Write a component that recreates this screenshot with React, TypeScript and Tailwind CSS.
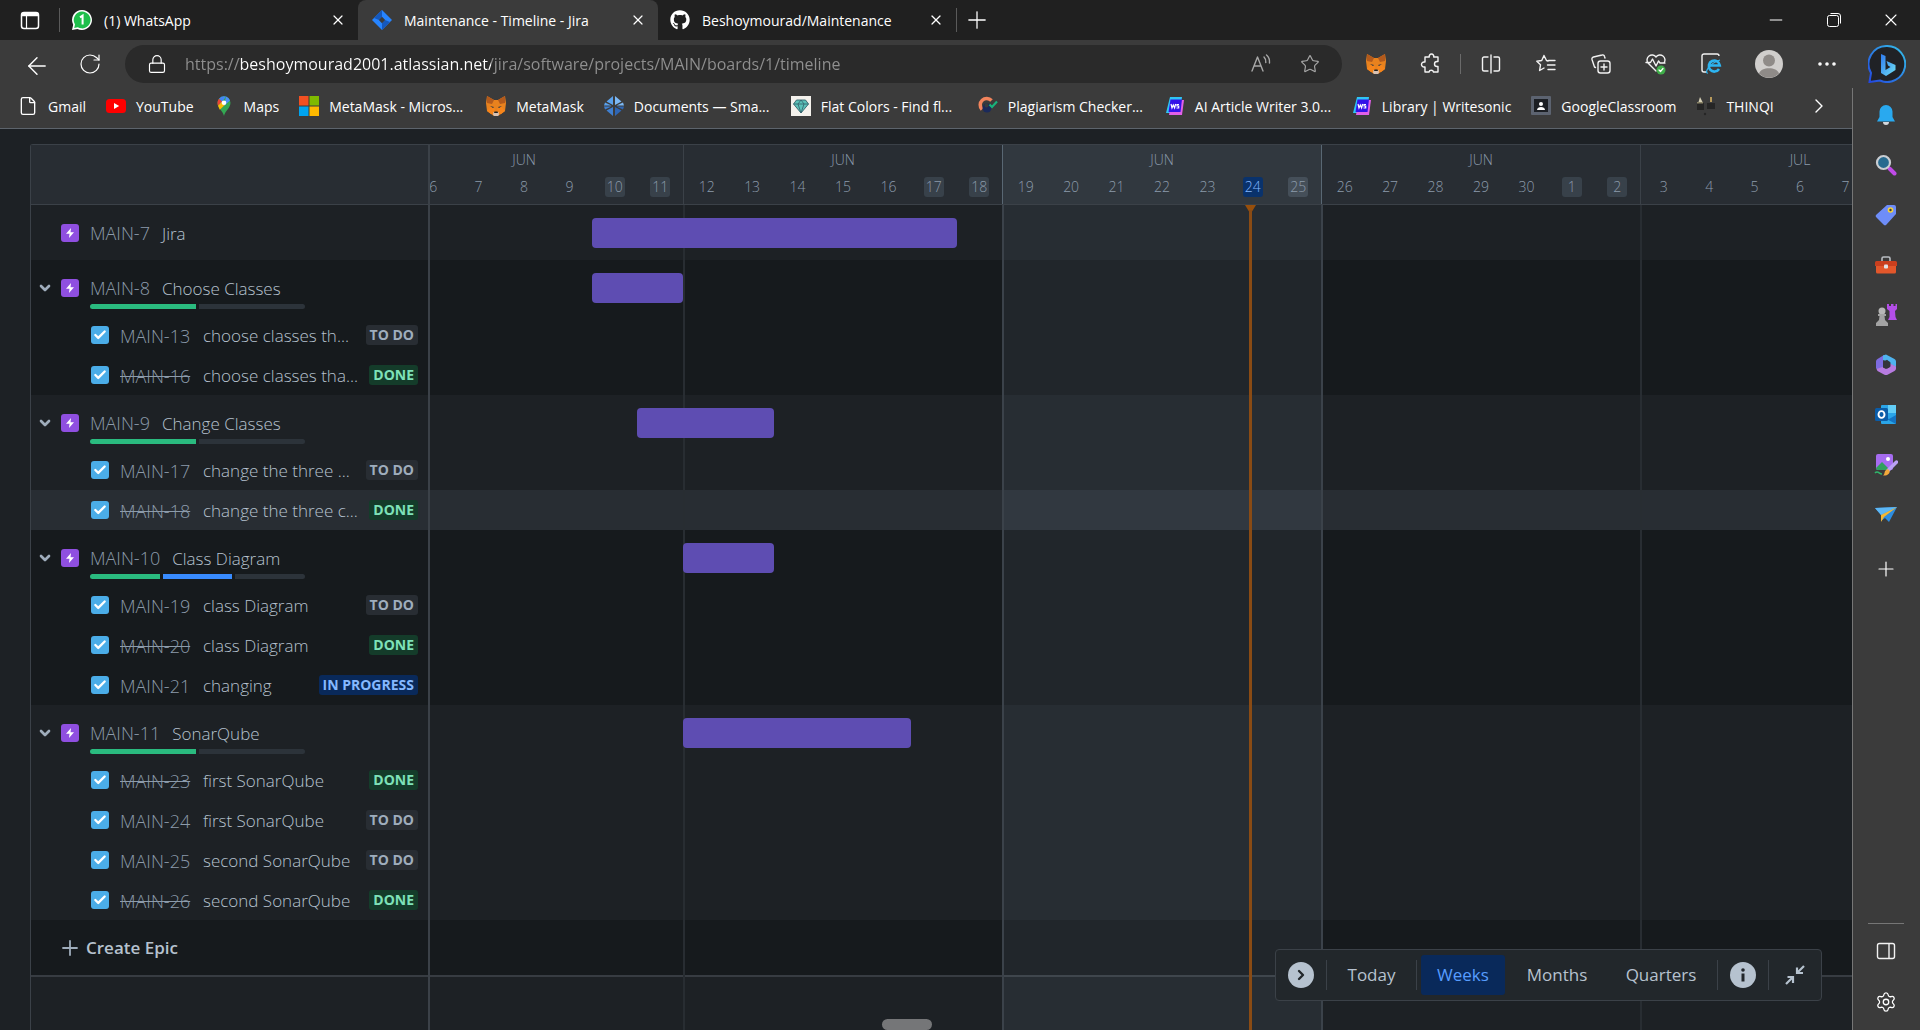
import React, { useState } from "react";
import {
  ArrowLeft,
  Check,
  ChevronDown,
  ChevronRight,
  Ellipsis,
  File,
  Lock,
  Minus,
  Plus,
  RotateCw,
  Settings,
  Star,
  X,
} from "lucide-react";
import { FaGithub } from "react-icons/fa";

type Status = "TO DO" | "DONE" | "IN PROGRESS";
type Task = { key: string; summary: string; status: Status; hovered?: boolean };
type Epic = {
  key: string;
  summary: string;
  segments: string[];
  tasks: Task[];
  start: number;
  days: number;
};

const GREEN = "bg-[#2abb7f]";
const BLUE = "bg-[#388bff]";
const GREY = "bg-[#2c333a]";

const epics: Epic[] = [
  { key: "MAIN-7", summary: "Jira", segments: [], tasks: [], start: 5, days: 8 },
  {
    key: "MAIN-8",
    summary: "Choose Classes",
    segments: [GREEN, GREY],
    start: 5,
    days: 2,
    tasks: [
      { key: "MAIN-13", summary: "choose classes th...", status: "TO DO" },
      { key: "MAIN-16", summary: "choose classes tha...", status: "DONE" },
    ],
  },
  {
    key: "MAIN-9",
    summary: "Change Classes",
    segments: [GREEN, GREY],
    start: 6,
    days: 3,
    tasks: [
      { key: "MAIN-17", summary: "change the three ...", status: "TO DO" },
      { key: "MAIN-18", summary: "change the three c...", status: "DONE", hovered: true },
    ],
  },
  {
    key: "MAIN-10",
    summary: "Class Diagram",
    segments: [GREEN, BLUE, GREY],
    start: 7,
    days: 2,
    tasks: [
      { key: "MAIN-19", summary: "class Diagram", status: "TO DO" },
      { key: "MAIN-20", summary: "class Diagram", status: "DONE" },
      { key: "MAIN-21", summary: "changing", status: "IN PROGRESS" },
    ],
  },
  {
    key: "MAIN-11",
    summary: "SonarQube",
    segments: [GREEN, GREY],
    start: 7,
    days: 5,
    tasks: [
      { key: "MAIN-23", summary: "first SonarQube", status: "DONE" },
      { key: "MAIN-24", summary: "first SonarQube", status: "TO DO" },
      { key: "MAIN-25", summary: "second SonarQube", status: "TO DO" },
      { key: "MAIN-26", summary: "second SonarQube", status: "DONE" },
    ],
  },
];

const weeks = [
  { month: "JUN", days: [5, 6, 7, 8, 9, 10, 11] },
  { month: "JUN", days: [12, 13, 14, 15, 16, 17, 18] },
  { month: "JUN", days: [19, 20, 21, 22, 23, 24, 25], current: true },
  { month: "JUN", days: [26, 27, 28, 29, 30, 1, 2] },
  { month: "JUL", days: [3, 4, 5, 6, 7] },
];

const statusStyle: Record<Status, string> = {
  "TO DO": "bg-[#282d33] text-[#9fadbc]",
  DONE: "bg-[#143c2a] text-[#7ee2b8]",
  "IN PROGRESS": "bg-[#09295a] text-[#85b8ff]",
};

/* ---------- Icons ---------- */

function WhatsAppIcon() {
  return (
    <svg viewBox="0 0 20 20" className="size-5">
      <path d="M10 0a10 10 0 1 1-4.6 18.9L0 20l1.2-5.3A10 10 0 0 1 10 0z" fill="#fff" />
      <path d="M10 1.6a8.4 8.4 0 1 1-4.2 15.6L2.2 18l.8-3.6A8.4 8.4 0 0 1 10 1.6z" fill="#1fbf4b" />
      <path d="M8 7.4 10.6 5.6v8.8" fill="none" stroke="#fff" strokeWidth="2" />
    </svg>
  );
}

function JiraIcon() {
  return (
    <svg viewBox="0 0 20 20" className="size-5">
      <path d="M10 0 20 10 10 20 0 10z" fill="#2684ff" />
      <path d="M10 0v7l-3 3-5-2z" fill="#1558bc" />
      <path d="M10 20v-7l3-3 5 2z" fill="#1558bc" />
      <path d="m10 6.8 3.2 3.2-3.2 3.2L6.800 10z" fill="#3b3b3b" />
    </svg>
  );
}

function FoxIcon() {
  return (
    <svg viewBox="0 0 20 20" className="size-5">
      <path d="M1 0 8 4h4l7-4 1 7-1 8-4 3-3 2H8l-3-2-4-3-1-8z" fill="#e8821e" />
      <path d="m1 0 7 4-2 4-5-1zM19 0l-7 4 2 4 5-1z" fill="#b35a1c" />
      <path d="m1 15 4-5 4 3-1 4-3 1zM19 15l-4-5-4 3 1 4 3 1z" fill="#f6851b" />
      <path d="m4 10 4 1-1 1zM16 10l-4 1 1 1z" fill="#233447" />
      <path d="M7.500 16h5l.5 2.500-1 1.500H8l-1-1.500z" fill="#d7c1b3" />
      <path d="M8.500 15.500h3l.5 1.500H8z" fill="#222" />
    </svg>
  );
}

function YouTubeIcon() {
  return (
    <svg viewBox="0 0 20 20" className="size-5">
      <rect y="3" width="20" height="14" rx="3.500" fill="#f00" />
      <path d="m8 7 5.200 3L8 13z" fill="#fff" />
    </svg>
  );
}

function MapsIcon() {
  return (
    <svg viewBox="0 0 20 20" className="size-5">
      <path d="M10 20C9 15 3.500 12 3.500 6.800a6.500 6.500 0 0 1 13 0C16.500 12 11 15 10 20z" fill="#34a853" />
      <path d="M5 2.700A6.500 6.500 0 0 1 12 .600L6 9z" fill="#4285f4" />
      <path d="M12 .600a6.500 6.500 0 0 1 4 3.800L10 10z" fill="#4b8df8" />
      <path d="M5 2.700 8 5.500l-4 4.200A7 7 0 0 1 5 2.700z" fill="#ea4335" />
      <path d="m4 9.700 5-5 2 4-5.200 5z" fill="#fbbc04" />
      <circle cx="10" cy="6.800" r="2.300" fill="#fff" />
    </svg>
  );
}

function MicrosoftIcon() {
  return (
    <svg viewBox="0 0 20 20" className="size-5">
      <rect width="9.500" height="9.500" fill="#f25022" />
      <rect x="10.500" width="9.500" height="9.500" fill="#7fba00" />
      <rect y="10.500" width="9.500" height="9.500" fill="#00a4ef" />
      <rect x="10.500" y="10.500" width="9.500" height="9.500" fill="#ffb900" />
    </svg>
  );
}

function DocumentsIcon() {
  return (
    <svg viewBox="0 0 20 20" className="size-5">
      <path d="M9 0v9L2.500 5.500zM1 6.500l6.500 3H0z" fill="#5aa2ee" />
      <path d="M11 0v9l6.500-3.500zM19 6.500l-6.500 3H20z" fill="#7db9f5" />
      <path d="M9 20v-9l-6.500 3.500zM1 13.500l6.500-3H0z" fill="#3f7fd0" />
      <path d="M11 20v-9l6.500 3.500zM19 13.500l-6.500-3H20z" fill="#2f66b4" />
    </svg>
  );
}

function GemIcon() {
  return (
    <svg viewBox="0 0 20 20" className="size-5">
      <rect width="20" height="20" fill="#f4f1ec" />
      <path d="M5.500 4h9L17.500 8 10 17 2.500 8z" fill="#5cc1b8" stroke="#33606a" strokeWidth=".9" />
      <path d="M2.500 8h15M7 8l3 9 3-9-3-4z" fill="none" stroke="#33606a" strokeWidth=".8" />
    </svg>
  );
}

function PlagiarismIcon() {
  return (
    <svg viewBox="0 0 20 20" className="size-5">
      <path d="M13.500 4.500A6.500 6.500 0 1 0 4 13.500" fill="none" stroke="#f2845c" strokeWidth="3.500" />
      <circle cx="9" cy="12" r="4.500" fill="#1b2a5b" />
      <circle cx="8.500" cy="9.500" r="2" fill="#3b3b3b" />
      <path d="m11.500 8.500 2.500 2.500 5-5.500" fill="none" stroke="#19b27b" strokeWidth="2.200" />
    </svg>
  );
}

function WritesonicIcon() {
  return (
    <svg viewBox="0 0 20 20" className="size-5">
      <path d="M5 1h12l-2 16H1z" fill="#2ec5f5" />
      <path d="M7 4h12l-2 15H4z" fill="#e160e8" />
      <path d="M5.500 3.500h11.500l-1.500 12.500H3.500z" fill="#3410e8" />
      <path d="m6 8 1 4 1.300-3 1.300 3 1-4M14 8.500h-2v1.500h1.700V12H11.500" fill="none" stroke="#fff" strokeWidth="1.200" />
    </svg>
  );
}

function ClassroomIcon() {
  return (
    <svg viewBox="0 0 20 20" className="size-5">
      <rect width="20" height="19" rx="1" fill="#5c6370" />
      <rect x="3" y="3" width="14" height="13" fill="#1c1f24" />
      <circle cx="10" cy="8" r="2" fill="#fff" />
      <path d="M6 14c0-4 8-4 8 0z" fill="#fff" />
    </svg>
  );
}

function ThinqiIcon() {
  return (
    <svg viewBox="0 0 20 20" className="size-5">
      <path d="M1 7h7v7H1zM11 7h8v6h-8z" fill="#252525" />
      <path d="M4 1 6.500 6h-4z" fill="#d7d1b7" />
      <path d="M14 1h2v5h-2z" fill="#b89a5b" />
      <path d="M1 6h6v1.500H1z" fill="#8b8568" />
      <circle cx="9" cy="18" r="1.200" fill="#262626" />
    </svg>
  );
}

function TabListIcon() {
  return (
    <svg viewBox="0 0 20 20" className="size-5" fill="none" stroke="#fff">
      <rect x="1.500" y="2.500" width="17" height="16" rx="2.500" strokeWidth="1.500" />
      <path d="M2 4.500h16" strokeWidth="3.500" />
      <path d="M6.500 6v12" strokeWidth="1.200" />
    </svg>
  );
}

const line = { fill: "none", stroke: "#f2f2f2", strokeWidth: 1.4, strokeLinejoin: "round", strokeLinecap: "round" } as const;

function ReadAloudIcon() {
  return (
    <svg viewBox="0 0 20 20" className="size-5" {...line} stroke="#a8a8a8">
      <path d="M1 17 6.500 3 12 17M3 12h7M13 3c1.500 1.500 2 3.500 1.800 5.500M15.500 1c2.500 2 3.300 5 3 8" />
    </svg>
  );
}

function PuzzleIcon() {
  return (
    <svg viewBox="0 0 22 22" className="size-[22px]" {...line}>
      <path d="M7 4h2.300a2.300 2.300 0 1 1 4.400 0H18v4.500h-1a2.400 2.400 0 0 0 0 5h1V19h-4.500a2.300 2.300 0 0 0-4.500 0H5v-5H4a2.400 2.400 0 1 1 0-5h1V4z" />
    </svg>
  );
}

function SplitIcon() {
  return (
    <svg viewBox="0 0 20 20" className="size-5" {...line}>
      <path d="M7 3H3a1.500 1.500 0 0 0-1.500 1.500v11A1.500 1.500 0 0 0 3 17h4M13 3h4a1.500 1.500 0 0 1 1.500 1.500v11A1.500 1.500 0 0 1 17 17h-4M10 1v18" />
    </svg>
  );
}

function FavoritesIcon() {
  return (
    <svg viewBox="0 0 20 20" className="size-5" {...line}>
      <path d="M12 7 10.500 6.500 8 1.500 5.700 6.500.800 7.200l3.700 3.600-.900 5.700L8 14M12.500 6.500H19M11.500 11H19M12 15.500h7" />
    </svg>
  );
}

function CollectionsIcon() {
  return (
    <svg viewBox="0 0 20 20" className="size-5" {...line}>
      <rect x="7" y="7" width="12" height="12" rx="2.500" />
      <path d="M13 10v6M10 13h6M4.500 13.500 3.500 13 1 5.500A2 2 0 0 1 2.500 3L11 1a2 2 0 0 1 2.500 1.500L14 4" />
    </svg>
  );
}

function HeartPulseIcon() {
  return (
    <svg viewBox="0 0 22 22" className="size-[22px]" {...line}>
      <path d="M11 18 3 10a5 5 0 0 1 8-6 5 5 0 0 1 8 6M1 9.500h4.500l2-3.500L11 13l2.500-5 1.500 2h5" />
      <circle cx="16" cy="17" r="4.500" fill="#3fae49" stroke="none" />
      <path d="m14 17 1.500 1.500 2.500-3" stroke="#fff" strokeWidth="1.200" />
    </svg>
  );
}

function IeModeIcon() {
  return (
    <svg viewBox="0 0 22 22" className="size-[22px]" fill="none">
      <path d="M7 19H4a2 2 0 0 1-2-2V3a2 2 0 0 1 2-2h13a2 2 0 0 1 2 2" stroke="#f2f2f2" strokeWidth="1.400" />
      <path d="M19 16a5.500 5.500 0 1 1 .8-3.500H9" stroke="#2db4f0" strokeWidth="2.600" />
      <path d="M8 20c-4 1 0-9 12-13" stroke="#2db4f0" strokeWidth="1.200" />
    </svg>
  );
}

function AvatarIcon() {
  return (
    <svg viewBox="0 0 28 28" className="size-7">
      <circle cx="14" cy="14" r="14" fill="#d0cecc" />
      <circle cx="14" cy="10.500" r="6" fill="#8f8b88" />
      <path d="M4 23.500C6 16.500 22 16.500 24 23.500A14 14 0 0 1 4 23.500z" fill="#8f8b88" />
    </svg>
  );
}

function BingIcon() {
  return (
    <svg viewBox="0 0 38 38" className="size-[38px]">
      <defs>
        <linearGradient id="bing-ring" x1="0" y1="1" x2="1" y2="0">
          <stop offset="0" stopColor="#2346e0" />
          <stop offset="1" stopColor="#35c1e8" />
        </linearGradient>
        <linearGradient id="bing-b" x1="0" y1="0" x2="1" y2="1">
          <stop offset="0" stopColor="#2f7bf0" />
          <stop offset="1" stopColor="#6fe0f5" />
        </linearGradient>
      </defs>
      <path d="M19 1a18 18 0 1 1-7 34.500L1.500 37 3 28A18 18 0 0 1 19 1z" fill="#202226" stroke="url(#bing-ring)" strokeWidth="2" />
      <path d="m13 9 4.500 2v14l5-3-2.500-1.500-1.500-4.500 9 4v5L18 31l-5-3z" fill="url(#bing-b)" />
    </svg>
  );
}

function BellIcon() {
  return (
    <svg viewBox="0 0 22 22" className="size-[22px]">
      <path d="M8 18h6a3 3 0 0 1-6 0z" fill="#d5d8dc" />
      <path d="M11 1a6.500 6.500 0 0 1 6.500 6.500V13l2.500 4.500H2L4.500 13V7.500A6.500 6.500 0 0 1 11 1z" fill="#29a9ef" />
    </svg>
  );
}

function SearchIcon() {
  return (
    <svg viewBox="0 0 22 22" className="size-[22px]">
      <path d="m14.500 14.500 5 5" stroke="#c04be8" strokeWidth="4" strokeLinecap="round" />
      <circle cx="8.500" cy="8.500" r="6.500" fill="#276a8f" stroke="#c9cdd2" strokeWidth="2.200" />
    </svg>
  );
}

function TagIcon() {
  return (
    <svg viewBox="0 0 22 22" className="size-[22px]">
      <path d="M12 1h7a2 2 0 0 1 2 2v7L11.500 20.500a2 2 0 0 1-3 0L1.500 13.500a2 2 0 0 1 0-3z" fill="#6e8df8" />
      <circle cx="15.500" cy="6" r="2.800" fill="#f5d33b" />
      <circle cx="15.500" cy="6" r="1.200" fill="#3b3b3b" />
    </svg>
  );
}

function ToolboxIcon() {
  return (
    <svg viewBox="0 0 22 22" className="size-[22px]">
      <path d="M7 7V4.500A1.500 1.500 0 0 1 8.500 3h5A1.500 1.500 0 0 1 15 4.500V7" fill="none" stroke="#b9bdc2" strokeWidth="1.600" />
      <path d="M1 12h20v6a1.500 1.500 0 0 1-1.500 1.500h-17A1.500 1.500 0 0 1 1 18z" fill="#e2572b" />
      <path d="M1.500 7h19a1.500 1.500 0 0 1 1.500 1.500V12H0V8.500A1.500 1.500 0 0 1 1.500 7z" fill="#c93f1e" />
      <rect x="9" y="10.500" width="4" height="4" rx="1" fill="#e1e3e6" />
    </svg>
  );
}

function ChessIcon() {
  return (
    <svg viewBox="0 0 22 22" className="size-[22px]">
      <path d="M12 0h2v2h2V0h2.500v2h2V0H22v5l-2 2 .5 6 1.500 3h-9l1.500-3V7L12 5z" fill="#b34ee8" />
      <circle cx="7" cy="7" r="3.500" fill="#b7b7b7" />
      <path d="M3 10h8v2H9.500l.5 4 3 3v3H1v-3l3-3 .5-4H3z" fill="#a3a3a3" />
    </svg>
  );
}

function M365Icon() {
  return (
    <svg viewBox="0 0 22 22" className="size-[22px]">
      <path d="M9 1 2.500 5A3 3 0 0 0 1 7.500v7L6.500 17 8 15V7z" fill="#7d6be0" />
      <path d="M8 1.500 11 .500l8.500 4.500A3 3 0 0 1 21 7.500V13l-6-3V8L8 6z" fill="#4fb3ee" />
      <path d="m1.500 15 6-2 5 1.500L15 13V9.500l6 3v2a3 3 0 0 1-1.500 2.500L13 20.500a4 4 0 0 1-4 0L2.500 17z" fill="#b77be0" />
      <path d="m8 8 4-2.200 3.500 2.700v4L11 15l-3-1.500z" fill="#34343a" />
    </svg>
  );
}

function OutlookIcon() {
  return (
    <svg viewBox="0 0 22 22" className="size-[22px]">
      <rect x="6" y="1" width="15" height="19" rx="1" fill="#2aa5e8" />
      <path d="M13 1h8v8h-8z" fill="#62cdf6" />
      <path d="m6 12 15 8V11l-7 4z" fill="#1374c4" />
      <rect x="0" y="4" width="13" height="13" rx="1.500" fill="#0a5ca8" />
      <ellipse cx="6.500" cy="10.500" rx="3" ry="3.400" fill="none" stroke="#fff" strokeWidth="1.900" />
    </svg>
  );
}

function DesignerIcon() {
  return (
    <svg viewBox="0 0 24 24" className="size-6">
      <rect x="2" y="1" width="17" height="16" rx="2" fill="#a66cf0" />
      <path d="m2 15 6-6 8 8H4a2 2 0 0 1-2-2z" fill="#2fa05c" />
      <circle cx="14" cy="6" r="2" fill="#fff" />
      <path d="m22.500 9-8 8" stroke="#b9a0f5" strokeWidth="3.500" strokeLinecap="round" />
      <path d="M12 17c2-2 5 1 3 3.500s-5 2-6 2c2-1 1-4 3-5.500z" fill="#f2a93b" />
      <path d="M1 20c3-3 4 1 7 1" fill="none" stroke="#2fb66b" strokeWidth="1.600" />
    </svg>
  );
}

function PlaneIcon() {
  return (
    <svg viewBox="0 0 22 22" className="size-[22px]">
      <path d="m0 4 22-1-8 15-4-4-4 3v-6z" fill="#2d8de0" />
      <path d="m0 4 22-1L6 11z" fill="#5db7f5" />
      <path d="M6 11 22 3 9 13l-3 5z" fill="#f5b731" />
    </svg>
  );
}

function SidePanelIcon() {
  return (
    <svg viewBox="0 0 20 20" className="size-5" {...line}>
      <rect x="1.500" y="2.500" width="17" height="15" rx="2" />
      <path d="M13 3v14" />
    </svg>
  );
}

function EpicIcon() {
  return (
    <span className="grid size-[18px] shrink-0 place-items-center rounded-[3px] bg-[#8f4fe0]">
      <svg viewBox="0 0 18 18" className="size-[18px]">
        <path d="M10 4 5 9.700h3.500L8 14l5-5.700H9.500z" fill="#fff" />
      </svg>
    </span>
  );
}

function TaskIcon() {
  return (
    <span className="grid size-[18px] shrink-0 place-items-center rounded-[3px] bg-[#4bade8]">
      <Check className="size-3.5 text-white" strokeWidth={4} />
    </span>
  );
}

/* ---------- Browser frame ---------- */

function Tab({ icon, title, active }: { icon: React.ReactNode; title: string; active?: boolean }) {
  return (
    <div
      className={`flex h-full items-center pr-2.5 ${
        active ? "w-[300px] rounded-t-lg bg-[#3b3b3b] pl-3.5" : "w-[298px] pl-3"
      }`}
    >
      {icon}
      <span className="ml-3 flex-1 truncate text-[14px]">{title}</span>
      <button aria-label={`Close ${title}`} className="grid size-5 place-items-center">
        <X className="size-4" strokeWidth={1.8} />
      </button>
    </div>
  );
}

function TabStrip() {
  return (
    <header className="flex h-10 shrink-0 items-center bg-[#202020]">
      <button aria-label="Tab actions" className="ml-5 grid size-5 place-items-center">
        <TabListIcon />
      </button>
      <span className="ml-[19px] h-6 w-px bg-[#5a5a5a]" />
      <Tab icon={<WhatsAppIcon />} title="(1) WhatsApp" />
      <Tab icon={<JiraIcon />} title="Maintenance - Timeline - Jira" active />
      <Tab icon={<FaGithub className="size-5" />} title="Beshoymourad/Maintenance" />
      <span className="h-6 w-px bg-[#5a5a5a]" />
      <button aria-label="New tab" className="ml-1.5 grid size-7 place-items-center">
        <Plus className="size-7" strokeWidth={1.1} />
      </button>
      <div className="ml-auto flex h-full">
        <button aria-label="Minimize" className="grid w-[58px] place-items-center">
          <Minus className="size-5" strokeWidth={1.2} />
        </button>
        <button aria-label="Restore" className="grid w-[57px] place-items-center">
          <svg viewBox="0 0 14 14" className="size-3.5" fill="none" stroke="#fff">
            <rect x=".5" y="2.500" width="11" height="11" rx="2" />
            <path d="M3.500.5H11A2.500 2.500 0 0 1 13.500 3v7.500" />
          </svg>
        </button>
        <button aria-label="Close window" className="grid w-[58px] place-items-center">
          <X className="size-5" strokeWidth={1.3} />
        </button>
      </div>
    </header>
  );
}

function IconButton({ label, children }: { label: string; children: React.ReactNode }) {
  return (
    <button aria-label={label} title={label} className="grid w-[55px] place-items-center">
      {children}
    </button>
  );
}

function Toolbar() {
  return (
    <div className="flex h-12 shrink-0 items-center bg-[#3b3b3b]">
      <button aria-label="Back" className="ml-[23px] grid size-6 place-items-center">
        <ArrowLeft className="size-7" strokeWidth={1.2} />
      </button>
      <button aria-label="Refresh" className="ml-[31px] grid size-6 place-items-center">
        <RotateCw className="size-6" strokeWidth={1.2} />
      </button>
      <div className="ml-[23px] flex h-[38px] flex-1 items-center rounded-full bg-[#2a2a2a] pl-[22px] pr-[22px]">
        <Lock className="size-5" strokeWidth={1.4} />
        <input
          aria-label="Address"
          defaultValue="https://beshoymourad2001.atlassian.net/jira/software/projects/MAIN/boards/1/timeline"
          className="ml-[18px] min-w-0 flex-1 bg-[linear-gradient(90deg,#909090_54px,#ffffff_54px,#ffffff_306px,#909090_306px)] bg-clip-text text-[16px] text-transparent outline-none"
        />
        <button aria-label="Read aloud" className="mr-[29px]">
          <ReadAloudIcon />
        </button>
        <button aria-label="Add to favorites">
          <Star className="size-5 text-[#a8a8a8]" strokeWidth={1.4} />
        </button>
      </div>
      <div className="ml-[6px] flex items-center">
        <IconButton label="MetaMask"><FoxIcon /></IconButton>
        <IconButton label="Extensions"><PuzzleIcon /></IconButton>
        <span className="mx-[2px] h-5 w-px bg-[#6a6a6a]" />
        <IconButton label="Split screen"><SplitIcon /></IconButton>
        <IconButton label="Favorites"><FavoritesIcon /></IconButton>
        <IconButton label="Collections"><CollectionsIcon /></IconButton>
        <IconButton label="Browser essentials"><HeartPulseIcon /></IconButton>
        <IconButton label="Internet Explorer mode"><IeModeIcon /></IconButton>
        <button aria-label="Profile" className="grid w-[61px] place-items-center"><AvatarIcon /></button>
        <IconButton label="Settings and more"><Ellipsis className="size-6" strokeWidth={1.6} /></IconButton>
        <button aria-label="Bing" className="mr-3.5 ml-3.5"><BingIcon /></button>
      </div>
    </div>
  );
}

const bookmarks = [
  { icon: <File className="size-5" strokeWidth={1.6} />, label: "Gmail" },
  { icon: <YouTubeIcon />, label: "YouTube" },
  { icon: <MapsIcon />, label: "Maps" },
  { icon: <MicrosoftIcon />, label: "MetaMask - Micros..." },
  { icon: <FoxIcon />, label: "MetaMask" },
  { icon: <DocumentsIcon />, label: "Documents — Sma..." },
  { icon: <GemIcon />, label: "Flat Colors - Find fl..." },
  { icon: <PlagiarismIcon />, label: "Plagiarism Checker..." },
  { icon: <WritesonicIcon />, label: "AI Article Writer 3.0..." },
  { icon: <WritesonicIcon />, label: "Library | Writesonic" },
  { icon: <ClassroomIcon />, label: "GoogleClassroom" },
  { icon: <ThinqiIcon />, label: "THINQI" },
];

function BookmarksBar() {
  return (
    <nav aria-label="Bookmarks" className="flex h-[41px] shrink-0 items-center border-b border-[#5d646c] bg-[#3b3b3b] pb-1 pl-[18px]">
      <div className="flex min-w-0 flex-1 items-center gap-5 overflow-hidden">
        {bookmarks.map((b) => (
          <a key={b.label} href="#" className="flex shrink-0 items-center gap-2.5 text-[14px]">
            {b.icon}
            <span className={b.label.endsWith("...") ? "min-w-[137px]" : ""}>{b.label}</span>
          </a>
        ))}
      </div>
      <button aria-label="More bookmarks" className="mr-[21px]">
        <ChevronRight className="size-6" strokeWidth={1.4} />
      </button>
    </nav>
  );
}

const apps = [
  { label: "Notifications", icon: <BellIcon /> },
  { label: "Search", icon: <SearchIcon /> },
  { label: "Shopping", icon: <TagIcon /> },
  { label: "Tools", icon: <ToolboxIcon /> },
  { label: "Games", icon: <ChessIcon /> },
  { label: "Microsoft 365", icon: <M365Icon /> },
  { label: "Outlook", icon: <OutlookIcon /> },
  { label: "Image Creator", icon: <DesignerIcon /> },
  { label: "Drop", icon: <PlaneIcon /> },
];

function AppsSidebar() {
  return (
    <aside className="flex w-[68px] shrink-0 flex-col items-center border-l border-[#767676] bg-[#3b3b3b] pt-[2px] pr-px">
      {apps.map((a) => (
        <button key={a.label} aria-label={a.label} title={a.label} className="grid h-[50px] w-full place-items-center">
          {a.icon}
        </button>
      ))}
      <button aria-label="Customize" className="mt-1 grid h-[50px] w-full place-items-center">
        <Plus className="size-6" strokeWidth={1.2} />
      </button>
      <div className="mt-auto h-px w-9 bg-[#767676]" />
      <button aria-label="Hide sidebar" className="grid h-[54px] w-full place-items-center">
        <SidePanelIcon />
      </button>
      <button aria-label="Settings" className="mb-1 grid h-12 w-full place-items-center">
        <Settings className="size-[22px]" strokeWidth={1.4} />
      </button>
    </aside>
  );
}

/* ---------- Timeline ---------- */

function TaskRow({ task }: { task: Task }) {
  return (
    <div className={`flex h-10 items-center pl-[60px] pr-2.5 ${task.hovered ? "bg-[#282d33]" : ""}`}>
      <TaskIcon />
      <a
        href="#"
        className={`ml-[11px] w-[83px] shrink-0 pt-0.5 text-[18px] text-[#8c9bab] ${
          task.status === "DONE" ? "line-through" : ""
        }`}
      >
        {task.key}
      </a>
      <span className="min-w-0 flex-1 pt-0.5 whitespace-nowrap">{task.summary}</span>
      <span className={`shrink-0 rounded-[3px] px-1 text-[14px] leading-5 font-bold ${statusStyle[task.status]}`}>
        {task.status}
      </span>
    </div>
  );
}

function EpicGroup({ epic, odd }: { epic: Epic; odd: boolean }) {
  return (
    <section className={odd ? "bg-[#161a1d]" : "bg-[#1d2125]"}>
      <div className="relative flex h-[55px] items-center pl-1.5">
        <button aria-label={`Toggle ${epic.key}`} className="mr-2 size-4">
          {epic.tasks.length > 0 && <ChevronDown className="size-4 text-[#9fadbc]" strokeWidth={4} />}
        </button>
        <EpicIcon />
        <a href="#" className="ml-[11px] pt-0.5 text-[18px] text-[#8c9bab]">{epic.key}</a>
        <span className="ml-3 pt-0.5">{epic.summary}</span>
        {epic.segments.length > 0 && (
          <div className="absolute bottom-1.5 left-[59px] flex h-[5px] w-[215px] gap-[3px] overflow-hidden rounded-full">
            {epic.segments.map((s, i) => (
              <span key={i} className={`flex-1 ${s}`} />
            ))}
          </div>
        )}
      </div>
      {epic.tasks.map((t) => (
        <TaskRow key={t.key} task={t} />
      ))}
    </section>
  );
}

const DAY = 319 / 7;

function TimelineHeader() {
  return (
    <div className="flex h-[60px] shrink-0 overflow-hidden border-b border-[#3b4148] bg-[#282d33] text-[14px] text-[#8c9bab]">
      <div className="-ml-[65px] flex">
        {weeks.map((w, i) => (
          <div
            key={i}
            className={`w-[319px] shrink-0 border-r pt-[5px] ${w.current ? "bg-[#31383f]" : ""} ${
              i === 1 || i === 2 ? "border-[#596773]" : "border-[#3b4148]"
            }`}
          >
            <div className="text-center leading-5">{w.month}</div>
            <div className="mt-[7px] grid grid-cols-7">
              {w.days.map((d, n) => (
                <div key={d} className="grid place-items-center">
                  <span
                    className={`min-w-5 rounded-[3px] px-0.5 text-center leading-5 ${
                      w.current && d === 24
                        ? "bg-[#09326c] text-[#85b8ff]"
                        : n > 4
                          ? w.current
                            ? "bg-[#454f59]"
                            : "bg-[#38414a]"
                          : ""
                    }`}
                  >
                    {d}
                  </span>
                </div>
              ))}
            </div>
          </div>
        ))}
      </div>
    </div>
  );
}

function Chart() {
  return (
    <div className="relative flex min-w-0 flex-1 flex-col overflow-hidden">
      {epics.map((e, i) => (
        <div key={e.key} className={i % 2 ? "bg-[#161a1d]" : "bg-[#1d2125]"}>
          <div className="h-[55px]" />
          {e.tasks.map((t) => (
            <div key={t.key} className={`h-10 ${t.hovered ? "bg-[#282d33]" : ""}`} />
          ))}
        </div>
      ))}
      <div className="h-[55px] bg-[#161a1d]" />
      <div className="h-0.5 bg-[#373c42]" />
      <div className="absolute inset-y-0 -left-[64px] flex">
        {weeks.map((w, i) => (
          <div
            key={i}
            className={`w-[319px] border-r-2 ${w.current ? "bg-[#a1bdd914]" : ""} ${
              i === 1 || i === 2 ? "border-[#3b424a]" : "border-[#282d32]"
            }`}
          />
        ))}
      </div>
      <div className="absolute inset-x-0 top-0">
        {epics.map((e) => (
          <div key={e.key}>
            <div className="h-[55px] pt-[13px]">
              <div
                className="h-[30px] rounded-[4px] bg-[#5e4db2]"
                style={{ width: Math.round(e.days * DAY), marginLeft: Math.round(e.start * DAY) - 66 }}
              />
            </div>
            {e.tasks.map((t) => (
              <div key={t.key} className="h-10" />
            ))}
          </div>
        ))}
      </div>
      <div className="absolute inset-y-0 left-[815px] flex w-[11px] flex-col items-center">
        <svg viewBox="0 0 11 9" className="h-[9px] w-[11px] shrink-0">
          <path d="M0 0h11L5.500 9z" fill="#974f0c" />
        </svg>
        <span className="-mt-1 w-[3px] flex-1 bg-[#8a4b14]" />
      </div>
    </div>
  );
}

function ViewControls() {
  const [mode, setMode] = useState("Weeks");
  const sep = <span className="h-[30px] w-px bg-[#3b4148]" />;
  return (
    <div className="absolute right-[30px] bottom-[29px] flex h-[52px] items-center rounded-[4px] border border-[#3b4148] bg-[#22272b] text-[17px] font-medium text-[#b6c2cf]">
      <button aria-label="Expand controls" className="mr-3 ml-3 grid size-[26px] place-items-center rounded-full bg-[#b6c2cf] text-[#22272b]">
        <ChevronRight className="size-4" strokeWidth={3.5} />
      </button>
      {sep}
      <button className="w-[89px]">Today</button>
      {sep}
      <div className="mx-1 flex">
        {["Weeks", "Months", "Quarters"].map((m) => (
          <button
            key={m}
            onClick={() => setMode(m)}
            className={`h-10 rounded-[3px] ${m === "Weeks" ? "w-[84px]" : "w-[104px]"} ${
              m === mode ? "bg-[#09295a] text-[#579dff]" : ""
            }`}
          >
            {m}
          </button>
        ))}
      </div>
      {sep}
      <button aria-label="Legend" className="mx-3">
        <svg viewBox="0 0 26 26" className="size-[26px]">
          <circle cx="13" cy="13" r="13" fill="#b6c2cf" />
          <circle cx="13" cy="8" r="1.800" fill="#22272b" />
          <path d="M13 11.500v8" stroke="#22272b" strokeWidth="3" />
        </svg>
      </button>
      {sep}
      <button aria-label="Exit full screen" className="mx-4">
        <svg viewBox="0 0 20 20" className="size-5" fill="none" stroke="#b6c2cf" strokeWidth="2.200">
          <path d="m19 1-7 7M12 2.500V8h6M1 19l7-7M2.500 12H8v6" />
        </svg>
      </button>
    </div>
  );
}

function TimelinePage() {
  return (
    <main className="relative flex min-h-0 flex-1 flex-col overflow-hidden bg-[#1d2125] pt-[15px] pl-[30px] font-light">
      <div className="flex min-h-0 flex-1 rounded-tl-[3px] border-t border-l border-[#3b4148] text-[17px] text-[#b6c2cf]">
        <div className="flex w-[399px] shrink-0 flex-col border-r-2 border-[#3b4148]">
          <div className="h-[60px] shrink-0 border-b border-[#3b4148] bg-[#282d33]" />
          {epics.map((e, i) => (
            <EpicGroup key={e.key} epic={e} odd={i % 2 === 1} />
          ))}
          <button className="flex h-[55px] shrink-0 items-center gap-1 bg-[#161a1d] pl-[27px] font-semibold">
            <Plus className="size-6 text-[#9fadbc]" strokeWidth={1.8} />
            Create Epic
          </button>
          <div className="h-0.5 shrink-0 bg-[#373c42]" />
        </div>
        <div className="flex min-w-0 flex-1 flex-col">
          <TimelineHeader />
          <Chart />
        </div>
      </div>
      <div className="absolute bottom-0 left-[882px] h-[11px] w-[50px] rounded-full bg-[#757678]" />
      <ViewControls />
    </main>
  );
}

export default function App() {
  return (
    <div className="flex h-screen flex-col overflow-hidden bg-[#3b3b3b] font-['Open_Sans','Noto_Sans',sans-serif] text-white">
      <TabStrip />
      <Toolbar />
      <div className="flex min-h-0 flex-1">
        <div className="flex min-w-0 flex-1 flex-col">
          <BookmarksBar />
          <TimelinePage />
        </div>
        <AppsSidebar />
      </div>
    </div>
  );
}
